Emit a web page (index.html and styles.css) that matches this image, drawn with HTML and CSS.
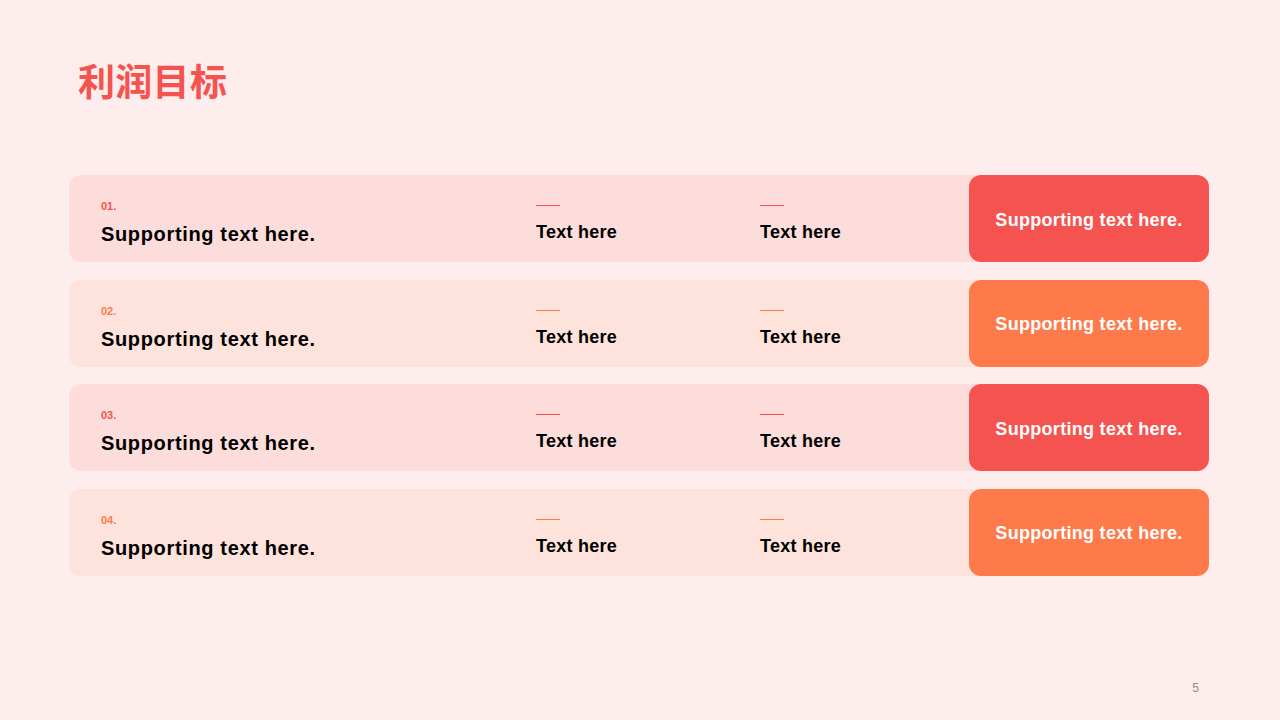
FILE: index.html
```html
<!DOCTYPE html>
<html lang="zh">
<head>
<meta charset="utf-8">
<link rel="stylesheet" href="styles.css">
</head>
<body>
<div class="page">
  <h1 class="title">利润目标</h1>
  <div class="rows">
    <div class="row red">
      <div class="bar">
        <div class="col-main">
          <div class="num">01.</div>
          <div class="main-text">Supporting text here.</div>
        </div>
        <div class="col-item"><div class="dash"></div><div class="item-text">Text here</div></div>
        <div class="col-item"><div class="dash"></div><div class="item-text">Text here</div></div>
      </div>
      <div class="box">Supporting text here.</div>
    </div>
    <div class="row orange">
      <div class="bar">
        <div class="col-main">
          <div class="num">02.</div>
          <div class="main-text">Supporting text here.</div>
        </div>
        <div class="col-item"><div class="dash"></div><div class="item-text">Text here</div></div>
        <div class="col-item"><div class="dash"></div><div class="item-text">Text here</div></div>
      </div>
      <div class="box">Supporting text here.</div>
    </div>
    <div class="row red">
      <div class="bar">
        <div class="col-main">
          <div class="num">03.</div>
          <div class="main-text">Supporting text here.</div>
        </div>
        <div class="col-item"><div class="dash"></div><div class="item-text">Text here</div></div>
        <div class="col-item"><div class="dash"></div><div class="item-text">Text here</div></div>
      </div>
      <div class="box">Supporting text here.</div>
    </div>
    <div class="row orange">
      <div class="bar">
        <div class="col-main">
          <div class="num">04.</div>
          <div class="main-text">Supporting text here.</div>
        </div>
        <div class="col-item"><div class="dash"></div><div class="item-text">Text here</div></div>
        <div class="col-item"><div class="dash"></div><div class="item-text">Text here</div></div>
      </div>
      <div class="box">Supporting text here.</div>
    </div>
  </div>
  <div class="footer"><span class="page-num">5</span></div>
</div>
</body>
</html>
```
FILE: styles.css
```css
* { box-sizing: border-box; }
html, body { margin: 0; padding: 0; }
body {
  background: #FDEDEC;
  font-family: "Liberation Sans", Arial, "Noto Sans CJK SC", sans-serif;
  color: #000;
}
.page {
  width: 1280px;
  height: 720px;
  padding: 56px 71px 0 69px;
  display: flex;
  flex-direction: column;
}
.title {
  margin: 0 0 0 9px;
  font-family: "Noto Sans CJK SC", sans-serif;
  font-weight: 700;
  font-size: 37px;
  line-height: 48px;
  height: 48px;
  letter-spacing: 0.3px;
  color: #F5534F;
}
.rows {
  margin-top: 71px;
  display: flex;
  flex-direction: column;
  gap: 17.6px;
}
.row {
  display: flex;
  height: 87px;
}
.bar {
  flex: 1;
  display: flex;
  margin-right: -20px;
  border-radius: 12px 0 0 12px;
  padding-left: 32px;
}
.red .bar { background: #FCDDDB; }
.orange .bar { background: #FDE3DC; }
.col-main {
  width: 435px;
  padding-top: 25px;
  display: flex;
  flex-direction: column;
}
.num {
  font-size: 11px;
  font-weight: 700;
  line-height: 13px;
}
.red .num { color: #F5534F; }
.orange .num { color: #FF7A4A; }
.main-text {
  margin-top: 9px;
  font-size: 20px;
  font-weight: 700;
  line-height: 24px;
  letter-spacing: 0.65px;
}
.col-item {
  width: 224px;
  padding-top: 30px;
  display: flex;
  flex-direction: column;
}
.dash {
  width: 24px;
  height: 1px;
}
.red .dash { background: #F5534F; }
.orange .dash { background: #FF7A4A; }
.item-text {
  margin-top: 15px;
  font-size: 18px;
  font-weight: 700;
  line-height: 22px;
  letter-spacing: 0.25px;
}
.box {
  width: 240px;
  border-radius: 12px;
  display: flex;
  align-items: center;
  justify-content: center;
  padding-top: 3px;
  color: #fff;
  font-size: 18px;
  font-weight: 700;
  letter-spacing: 0.3px;
}
.red .box { background: #F5534F; }
.orange .box { background: #FF7A4A; }
.footer {
  margin-top: auto;
  height: 39px;
  display: flex;
  justify-content: flex-end;
  padding-right: 10px;
}
.page-num {
  font-size: 12px;
  color: #8c8c8c;
  line-height: 14px;
}
```
